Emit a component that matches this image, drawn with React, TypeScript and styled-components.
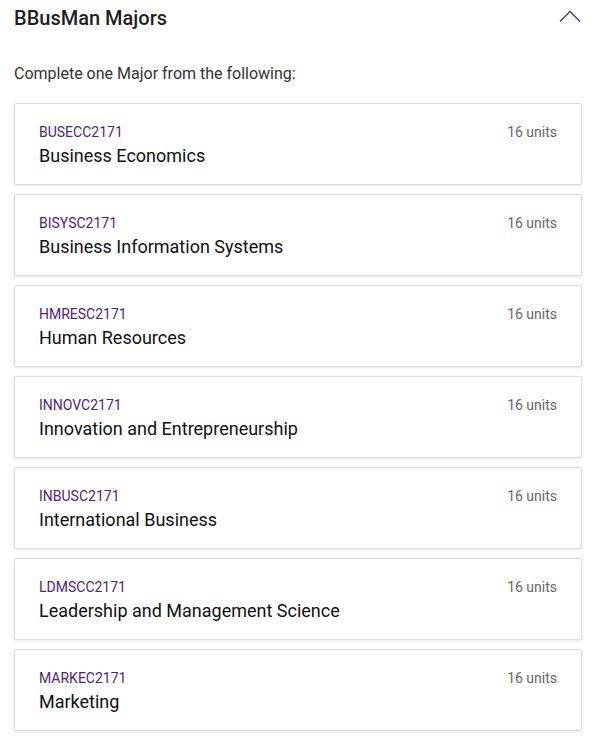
import React from "react";
import styled, { createGlobalStyle } from "styled-components";

const Global = createGlobalStyle`
  html, body { margin: 0; padding: 0; background: #fff; }
  body { font-family: Roboto, "Liberation Sans", Arial, sans-serif; }
`;

const Page = styled.div`
  padding: 0 12px 8px 14px;
`;

const Header = styled.div`
  display: flex;
  align-items: center;
  justify-content: space-between;
  height: 35px;
`;

const Title = styled.h2`
  margin: 0;
  font-size: 20px;
  font-weight: 500;
  color: #1f1f1f;
  letter-spacing: 0;
`;

const Toggle = styled.button`
  border: none;
  background: none;
  padding: 0;
  margin-right: 1px;
  margin-bottom: 3px;
  display: flex;
  cursor: pointer;
`;

const Intro = styled.p`
  margin: 29px 0 19px;
  font-size: 16px;
  color: #333;
  line-height: 20px;
`;

const List = styled.div`
  display: flex;
  flex-direction: column;
  gap: 9px;
`;

const Card = styled.div`
  display: flex;
  justify-content: space-between;
  align-items: flex-start;
  height: 82px;
  box-sizing: border-box;
  padding: 19px 24px 0 24px;
  border: 1px solid #dcdcdc;
  border-radius: 2px;
  background: #fff;
  box-shadow: 0 1px 3px rgba(0, 0, 0, 0.1);
`;

const Info = styled.div`
  display: flex;
  flex-direction: column;
  gap: 3px;
`;

const Code = styled.span`
  font-size: 14px;
  line-height: 18px;
  color: #51247a;
`;

const Name = styled.span`
  font-size: 18px;
  line-height: 24px;
  color: #111;
`;

const Units = styled.span`
  font-size: 14px;
  line-height: 18px;
  color: #666;
`;

const majors = [
  ["BUSECC2171", "Business Economics"],
  ["BISYSC2171", "Business Information Systems"],
  ["HMRESC2171", "Human Resources"],
  ["INNOVC2171", "Innovation and Entrepreneurship"],
  ["INBUSC2171", "International Business"],
  ["LDMSCC2171", "Leadership and Management Science"],
  ["MARKEC2171", "Marketing"],
];

export default function App() {
  return (
    <Page>
      <Global />
      <Header>
        <Title>BBusMan Majors</Title>
        <Toggle aria-label="Collapse">
          <svg width="22" height="12" viewBox="0 0 22 12" fill="none">
            <path d="M1 11.5 L11 1.5 L21 11.5" stroke="#4a3a6a" strokeWidth="1.4" />
          </svg>
        </Toggle>
      </Header>
      <Intro>Complete one Major from the following:</Intro>
      <List>
        {majors.map(([code, name]) => (
          <Card key={code}>
            <Info>
              <Code>{code}</Code>
              <Name>{name}</Name>
            </Info>
            <Units>16 units</Units>
          </Card>
        ))}
      </List>
    </Page>
  );
}
